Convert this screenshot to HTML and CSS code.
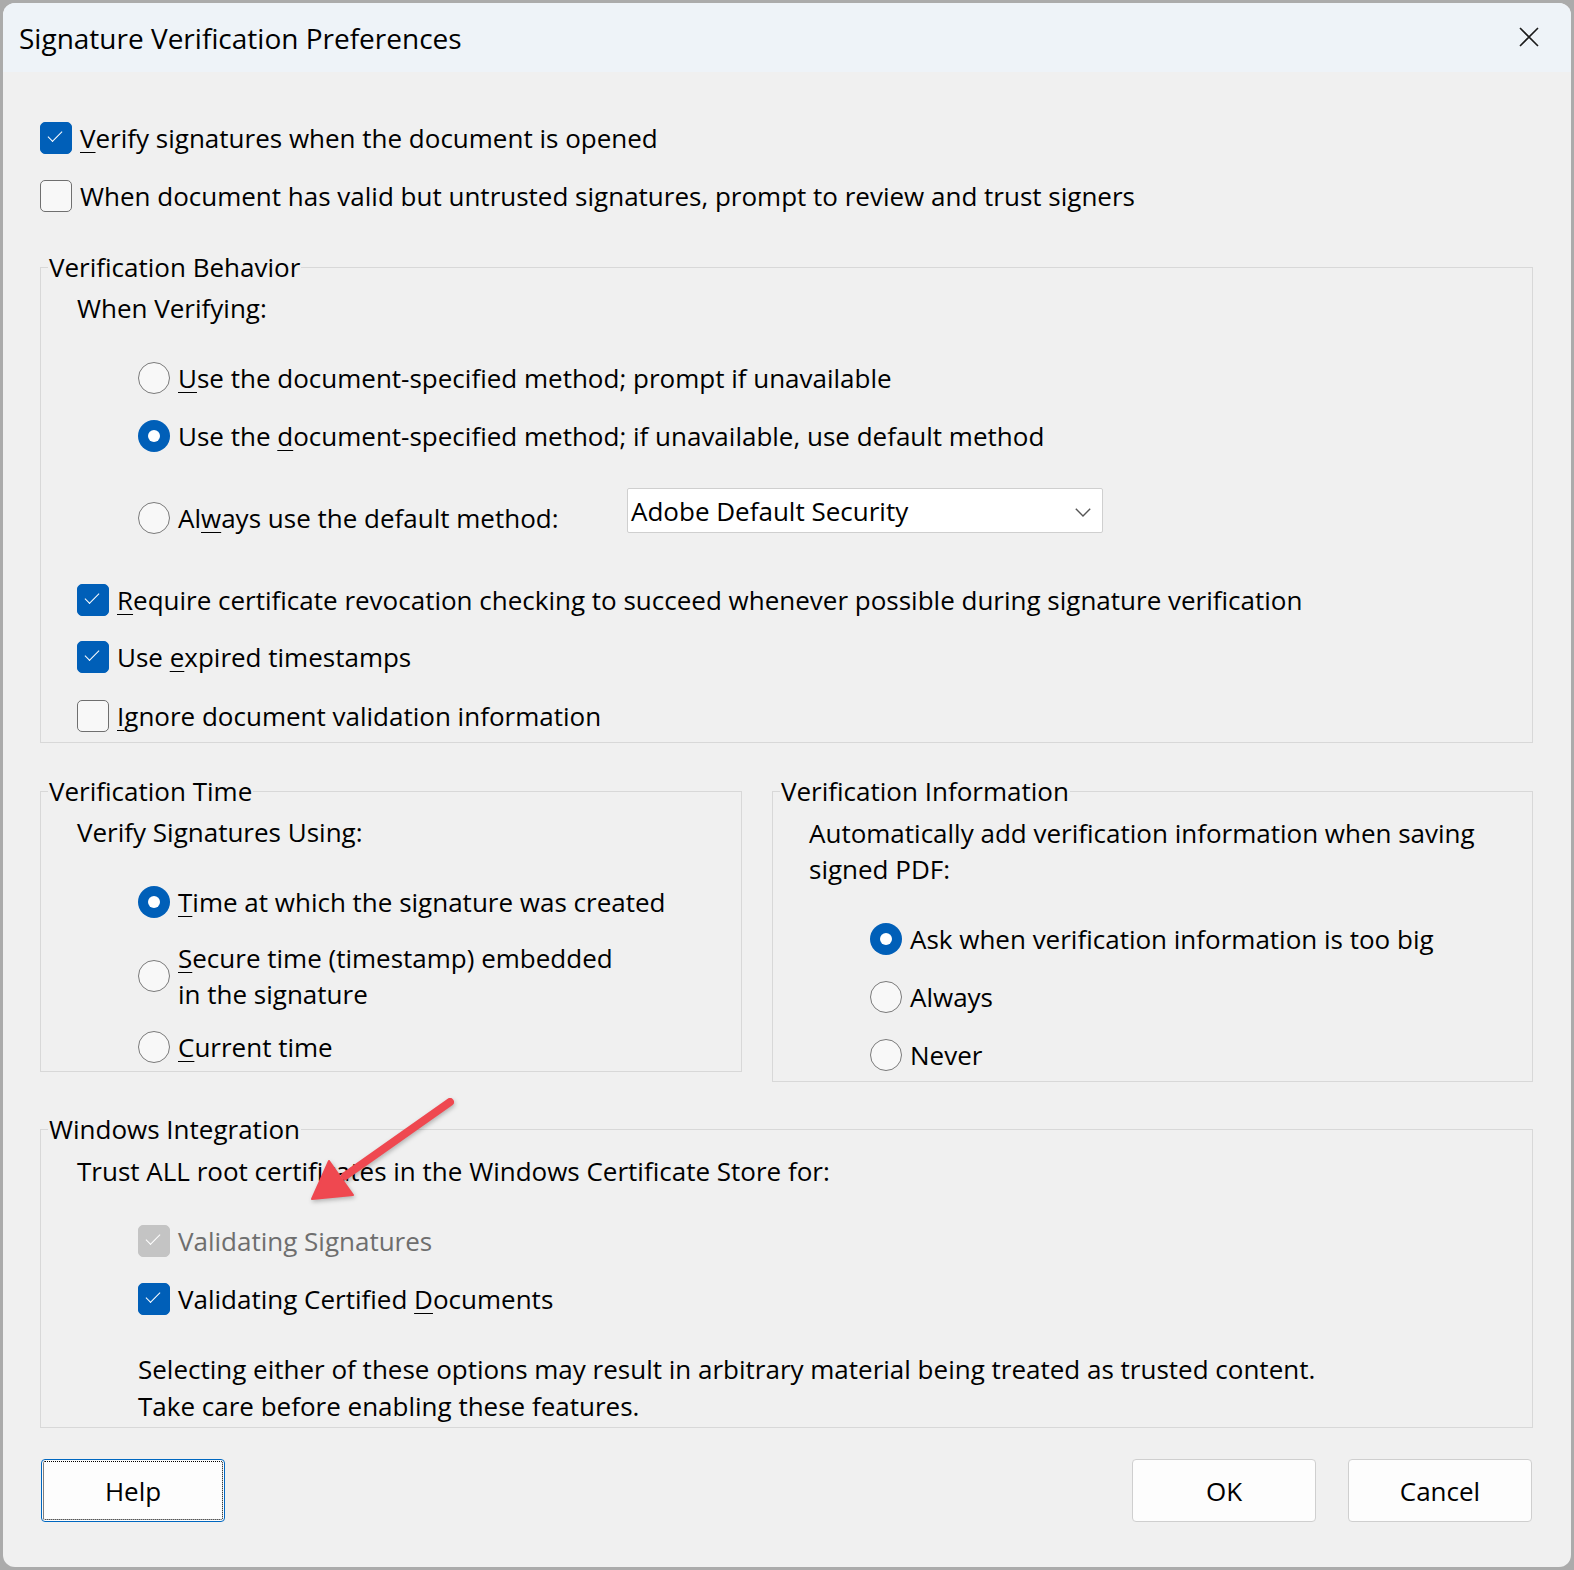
FILE: index.html
```html
<!DOCTYPE html>
<html lang="en">
<head>
<meta charset="utf-8">
<title>Signature Verification Preferences</title>
<link rel="stylesheet" href="styles.css">
</head>
<body>
<div class="dialog">
  <header class="titlebar">
    <span class="title">Signature Verification Preferences</span>
    <svg class="close" width="20" height="20" viewBox="0 0 20 20" aria-hidden="true"><path d="M1 1L19 19M19 1L1 19" stroke="#1b1b1b" stroke-width="1.6" fill="none"/></svg>
  </header>

  <main class="content">
    <div class="row"><span class="cb on"></span><span class="lbl"><u>V</u>erify signatures when the document is opened</span></div>
    <div class="row"><span class="cb"></span><span class="lbl">When document has valid but untrusted signatures, prompt to review and trust signers</span></div>

    <fieldset class="group behavior">
      <legend>Verification Behavior</legend>
      <div class="gbody">
        <div class="head">When Verifying:</div>
        <div class="row ind mt18"><span class="rb"></span><span class="lbl"><u>U</u>se the document-specified method; prompt if unavailable</span></div>
        <div class="row ind"><span class="rb on"></span><span class="lbl">Use the <u>d</u>ocument-specified method; if unavailable, use default method</span></div>
        <div class="row ind mt24"><span class="rb"></span><span class="lbl method-label">Al<u>w</u>ays use the default method:</span>
          <div class="select"><span>Adobe Default Security</span><svg width="16" height="9" viewBox="0 0 16 9" aria-hidden="true"><path d="M0.8 0.8L8 8L15.2 0.8" stroke="#555" stroke-width="1.4" fill="none"/></svg></div>
        </div>
        <div class="row h52 mt27"><span class="cb on"></span><span class="lbl"><u>R</u>equire certificate revocation checking to succeed whenever possible during signature verification</span></div>
        <div class="row h52 mt5"><span class="cb on"></span><span class="lbl">Use <u>e</u>xpired timestamps</span></div>
        <div class="row h52 mt7"><span class="cb"></span><span class="lbl"><u>I</u>gnore document validation information</span></div>
      </div>
    </fieldset>

    <div class="pair">
      <fieldset class="group">
        <legend>Verification Time</legend>
        <div class="gbody">
          <div class="head">Verify Signatures Using:</div>
          <div class="row ind mt18"><span class="rb on"></span><span class="lbl"><u>T</u>ime at which the signature was created</span></div>
          <div class="row ind h72 mt9"><span class="rb"></span><span class="lbl"><u>S</u>ecure time (timestamp) embedded<br>in the signature</span></div>
          <div class="row ind h48 mt11"><span class="rb"></span><span class="lbl"><u>C</u>urrent time</span></div>
        </div>
      </fieldset>
      <fieldset class="group">
        <legend>Verification Information</legend>
        <div class="gbody">
          <p class="para info-text">Automatically add verification information when saving signed PDF:</p>
          <div class="row ind mt23"><span class="rb on"></span><span class="lbl">Ask when verification information is too big</span></div>
          <div class="row ind"><span class="rb"></span><span class="lbl">Always</span></div>
          <div class="row ind h52 mt3"><span class="rb"></span><span class="lbl">Never</span></div>
        </div>
      </fieldset>
    </div>

    <fieldset class="group windows">
      <legend>Windows Integration</legend>
      <div class="gbody">
        <div class="head mt1">Trust ALL root certificates in the Windows Certificate Store for:</div>
        <div class="row ind mt18"><span class="cb dis"></span><span class="lbl disabled">Validating Signatures</span></div>
        <div class="row ind"><span class="cb on"></span><span class="lbl">Validating Certified <u>D</u>ocuments</span></div>
        <p class="para note">Selecting either of these options may result in arbitrary material being treated as trusted content.<br>Take care before enabling these features.</p>
      </div>
    </fieldset>

    <footer class="buttons">
      <button class="btn focus" type="button">Help</button>
      <span class="spacer"></span>
      <button class="btn" type="button">OK</button>
      <button class="btn" type="button">Cancel</button>
    </footer>
  </main>

  <svg class="annot" width="180" height="130" viewBox="290 1085 180 130" aria-hidden="true">
    <path d="M450 1102L345 1176" stroke="#ef4850" stroke-width="8" stroke-linecap="round" fill="none"/>
    <polygon points="312,1199 329,1161 353,1195" fill="#ef4850" stroke="#ef4850" stroke-width="2" stroke-linejoin="round"/>
  </svg>
</div>
</body>
</html>
```
FILE: styles.css
```css
html, body {
  margin: 0;
  background: #ababab;
}

body {
  font-family: "Open Sans", "Noto Sans", sans-serif;
  color: #000;
}

.dialog {
  position: relative;
  margin: 3px;
  width: 1568px;
  height: 1564px;
  background: #f0f0f0;
  border-radius: 12px;
  overflow: hidden;
  font-size: 26px;
}

.titlebar {
  height: 69px;
  background: #eef3f8;
  display: flex;
  align-items: center;
  justify-content: space-between;
  padding: 0 32px 0 16px;
}

.title {
  font-size: 28px;
  line-height: 36px;
}

.close {
  display: block;
  margin-top: -2px;
}

.content {
  padding: 37px 38px 0 37px;
}

u {
  text-decoration-thickness: 1px;
  text-underline-offset: 4px;
}

.row {
  display: flex;
  align-items: center;
  gap: 8px;
  height: 58px;
}

.lbl {
  line-height: 36px;
  white-space: nowrap;
}

.lbl.disabled {
  color: #6e6e6e;
}

.head {
  display: flex;
  align-items: center;
  height: 46px;
  line-height: 36px;
}

.h52 { height: 52px; }
.h48 { height: 48px; }
.h72 { height: 72px; }

.mt1 { margin-top: 1px; }
.mt3 { margin-top: 3px; }
.mt5 { margin-top: 5px; }
.mt7 { margin-top: 7px; }
.mt9 { margin-top: 9px; }
.mt11 { margin-top: 11px; }
.mt18 { margin-top: 18px; }
.mt23 { margin-top: 23px; }
.mt24 { margin-top: 24px; }
.mt27 { margin-top: 27px; }

.ind { margin-left: 61px; }

/* checkbox */
.cb {
  flex: none;
  position: relative;
  width: 32px;
  height: 32px;
  box-sizing: border-box;
  border: 1.5px solid #6f6f6f;
  border-radius: 5px;
  background: #f8f8f8;
}

.cb.on {
  background: #005fb8;
  border-color: #005fb8;
}

.cb.dis {
  background: #c4c4c4;
  border-color: #c4c4c4;
}

.cb.on::after,
.cb.dis::after {
  content: "";
  position: absolute;
  left: 7px;
  top: 8px;
  width: 13px;
  height: 6px;
  border-left: 1.7px solid #fff;
  border-bottom: 1.7px solid #fff;
  transform: rotate(-45deg);
}

/* radio */
.rb {
  flex: none;
  position: relative;
  width: 32px;
  height: 32px;
  box-sizing: border-box;
  border: 1.5px solid #7a7a7a;
  border-radius: 50%;
  background: #f8f8f8;
}

.rb.on {
  border: none;
  background: #005fb8;
}

.rb.on::after {
  content: "";
  position: absolute;
  left: 10px;
  top: 10px;
  width: 12px;
  height: 12px;
  border-radius: 50%;
  background: #fff;
}

/* group boxes */
.group {
  margin: 0;
  padding: 0;
  border: 1px solid #d8d8d8;
  min-width: 0;
}

.group legend {
  margin-left: 7px;
  padding: 0 1px;
  font-size: 26px;
  line-height: 36px;
}

.gbody {
  padding-left: 36px;
}

.behavior {
  margin-top: 24px;
}

.method-label {
  width: 449px;
}

.select {
  flex: none;
  width: 476px;
  height: 45px;
  box-sizing: border-box;
  margin-left: -8px;
  margin-bottom: 15px;
  background: #fff;
  border: 1px solid #cfcfcf;
  border-radius: 2px;
  display: flex;
  align-items: center;
  justify-content: space-between;
  padding: 0 11px 0 3px;
  line-height: 36px;
}

.select svg {
  display: block;
  margin-top: 3px;
}

.pair {
  margin-top: 30px;
  display: grid;
  grid-template-columns: 702px 761px;
  column-gap: 30px;
  align-items: start;
}

.para {
  margin: 0;
  line-height: 36px;
}

.info-text {
  margin-top: 6px;
  max-width: 700px;
}

.windows {
  margin-top: 29px;
}

.note {
  margin: 23px 0 0 61px;
  padding-bottom: 2px;
  line-height: 37px;
}

.buttons {
  margin-top: 31px;
  display: flex;
  gap: 32px;
  padding: 0 1px;
}

.spacer {
  flex: 1;
}

.btn {
  width: 184px;
  height: 63px;
  box-sizing: border-box;
  margin: 0;
  padding: 0;
  background: #fdfdfd;
  border: 1px solid #cfcfcf;
  border-radius: 4px;
  font: inherit;
  font-size: 26px;
  color: #000;
}

.btn.focus {
  border-color: #0067c0;
  outline: 1px dotted #000;
  outline-offset: -3px;
}

.annot {
  position: absolute;
  left: 287px;
  top: 1082px;
  pointer-events: none;
  filter: drop-shadow(1px 2px 2px rgba(0, 0, 0, 0.25));
}
```
